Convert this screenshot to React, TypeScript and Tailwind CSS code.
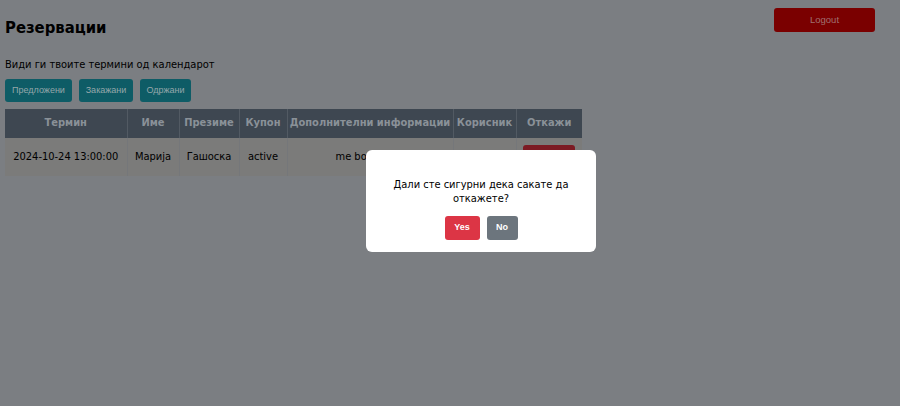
import React from 'react';

const comic = { fontFamily: '"DejaVu Sans Condensed", "Liberation Sans Narrow", "Noto Sans", sans-serif' };

const columns = [
  { name: 'Термин', w: 'w-[122px]' },
  { name: 'Име', w: 'w-[52px]' },
  { name: 'Презиме', w: 'w-[60px]' },
  { name: 'Купон', w: 'w-[48px]' },
  { name: 'Дополнителни информации', w: 'w-[166px]' },
  { name: 'Корисник', w: 'w-[63px]' },
  { name: 'Откажи', w: 'w-[66px]' },
];

const tabs = [
  { name: 'Предложени', w: 'w-[67px]' },
  { name: 'Закажани', w: 'w-[54px]' },
  { name: 'Одржани', w: 'w-[51px]' },
];

const App: React.FC = () => {
  return (
    <div className="relative min-h-[406px] w-full bg-[#7b7e82] text-[#111]" style={comic}>
      {/* Header */}
      <div className="flex items-start justify-between pl-[5px] pr-[25px] pt-[8px]">
        <h1 className="mt-[8px] text-[16.5px] font-bold leading-[24px] text-black">Резервации</h1>
        <button className="h-[24px] w-[101px] rounded-[3px] bg-[#7a0000] font-['Liberation_Sans',sans-serif] text-[9.5px] text-[#a07070]">
          Logout
        </button>
      </div>

      <p className="mt-[17px] pl-[5px] text-[11px] leading-[16px] text-black">Види ги твоите термини од календарот</p>

      {/* Tabs */}
      <div className="mt-[6px] flex gap-[7px] pl-[5px]">
        {tabs.map(t => (
          <button
            key={t.name}
            className={`${t.w} h-[23px] rounded-[3px] bg-[#0e5c66] font-['Liberation_Sans',sans-serif] text-[9px] text-[#95a7aa]`}
          >
            {t.name}
          </button>
        ))}
      </div>

      {/* Table */}
      <table className="ml-[5px] mt-[7px] w-[577px] table-fixed border-collapse text-center">
        <thead>
          <tr className="h-[29px] bg-[#3e4751] text-[11px] font-bold text-[#8a9198]">
            {columns.map((c, i) => (
              <th key={c.name} className={`${c.w} ${i > 0 ? 'border-l border-[#525a63]' : ''} px-0 font-bold whitespace-nowrap`}>
                {c.name}
              </th>
            ))}
          </tr>
        </thead>
        <tbody>
          <tr className="h-[38px] bg-[#7b7b7a] text-[11px] text-black">
            <td className="whitespace-nowrap">2024-10-24 13:00:00</td>
            <td className="border-l border-[#75777a]">Марија</td>
            <td className="border-l border-[#75777a]">Гашоска</td>
            <td className="border-l border-[#75777a]">active</td>
            <td className="border-l border-[#75777a] pl-[48px] text-left">me bol</td>
            <td className="border-l border-[#75777a]"></td>
            <td className="border-l border-[#75777a] align-top pt-[7px]">
              <div className="mx-auto h-[20px] w-[52px] rounded-[3px] bg-[#7c1a23]"></div>
            </td>
          </tr>
        </tbody>
      </table>

      {/* Confirm dialog */}
      <div className="absolute left-[366px] top-[150px] flex h-[102px] w-[230px] flex-col items-center rounded-[6px] bg-white pt-[28px]">
        <p className="text-center text-[11px] leading-[14px] text-black">
          Дали сте сигурни дека сакате да
          <br />
          откажете?
        </p>
        <div className="mt-[10px] flex gap-[7px]">
          <button className="h-[24px] w-[35px] rounded-[3px] bg-[#dc3545] font-['Liberation_Sans',sans-serif] text-[9px] font-bold text-white">
            Yes
          </button>
          <button className="h-[24px] w-[31px] rounded-[3px] bg-[#6c757d] font-['Liberation_Sans',sans-serif] text-[9px] font-bold text-white">
            No
          </button>
        </div>
      </div>
    </div>
  );
};

export default App;
